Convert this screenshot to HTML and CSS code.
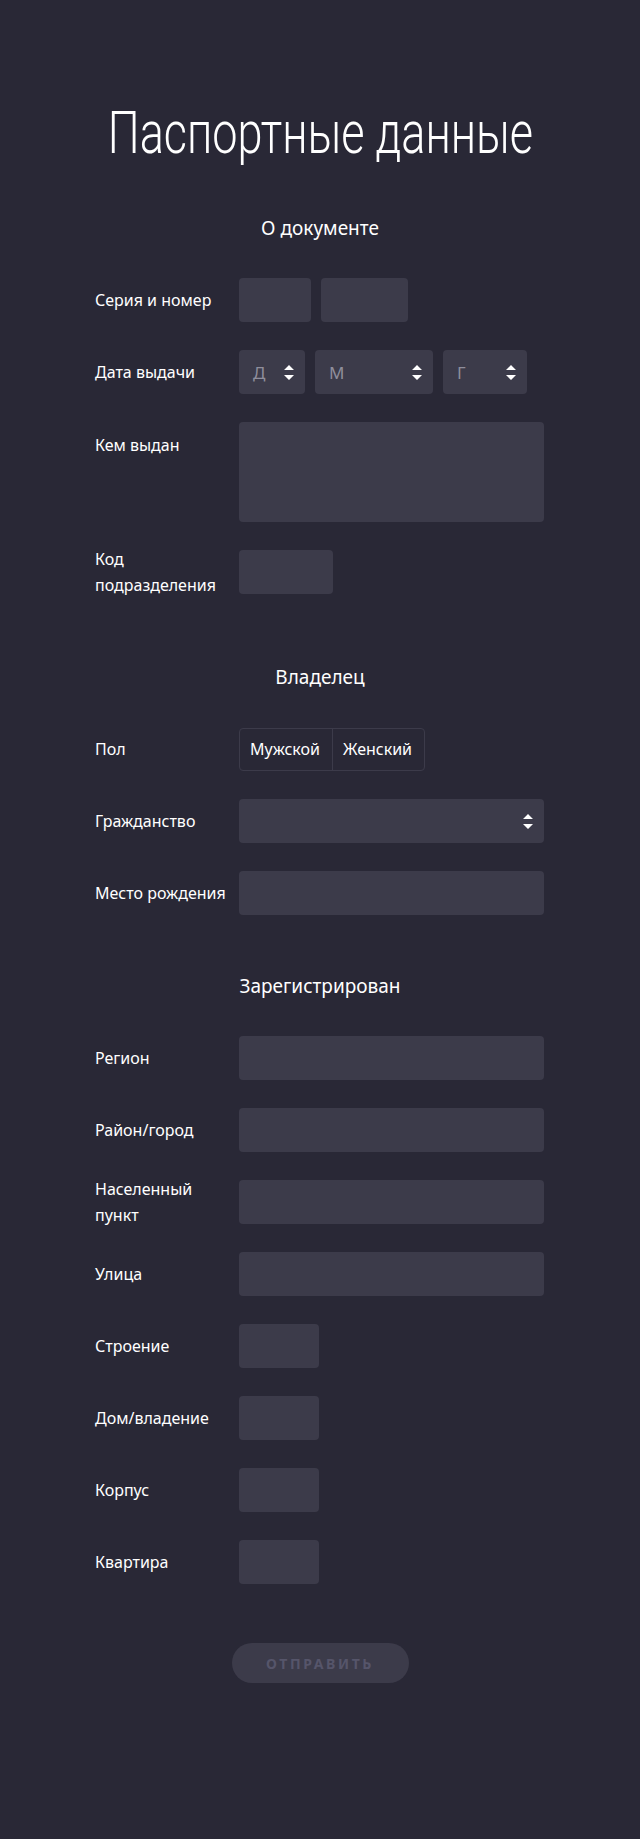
FILE: index.html
```html
<!DOCTYPE html>
<html lang="ru">
<head>
<meta charset="utf-8">
<title>Паспортные данные</title>
<link rel="stylesheet" href="styles.css">
</head>
<body>
<main class="page">
  <h1 class="title"><span class="title-text">Паспортные данные</span></h1>
  <form class="form">
    <section class="section section-first">
      <h2 class="section-title">О документе</h2>
      <div class="row">
        <div class="label">Серия и номер</div>
        <div class="fields">
          <div class="field w-series"></div>
          <div class="field w-number"></div>
        </div>
      </div>
      <div class="row">
        <div class="label">Дата выдачи</div>
        <div class="fields">
          <div class="field select w-day"><span class="placeholder">Д</span><svg class="arrows" width="10" height="15" viewBox="0 0 10 15"><path d="M5 0 L10 5 L0 5 Z M0 10 L10 10 L5 15 Z" fill="#fff"/></svg></div>
          <div class="field select w-month"><span class="placeholder">М</span><svg class="arrows" width="10" height="15" viewBox="0 0 10 15"><path d="M5 0 L10 5 L0 5 Z M0 10 L10 10 L5 15 Z" fill="#fff"/></svg></div>
          <div class="field select w-year"><span class="placeholder">Г</span><svg class="arrows" width="10" height="15" viewBox="0 0 10 15"><path d="M5 0 L10 5 L0 5 Z M0 10 L10 10 L5 15 Z" fill="#fff"/></svg></div>
        </div>
      </div>
      <div class="row row-top">
        <div class="label">Кем выдан</div>
        <div class="fields">
          <div class="field textarea"></div>
        </div>
      </div>
      <div class="row">
        <div class="label">Код подразделения</div>
        <div class="fields">
          <div class="field w-code"></div>
        </div>
      </div>
    </section>

    <section class="section">
      <h2 class="section-title">Владелец</h2>
      <div class="row">
        <div class="label">Пол</div>
        <div class="fields">
          <div class="segmented">
            <span class="segment">Мужской</span>
            <span class="segment">Женский</span>
          </div>
        </div>
      </div>
      <div class="row">
        <div class="label">Гражданство</div>
        <div class="fields">
          <div class="field select w-full"><span class="placeholder"></span><svg class="arrows" width="10" height="15" viewBox="0 0 10 15"><path d="M5 0 L10 5 L0 5 Z M0 10 L10 10 L5 15 Z" fill="#fff"/></svg></div>
        </div>
      </div>
      <div class="row">
        <div class="label">Место рождения</div>
        <div class="fields">
          <div class="field w-full"></div>
        </div>
      </div>
    </section>

    <section class="section">
      <h2 class="section-title">Зарегистрирован</h2>
      <div class="row">
        <div class="label">Регион</div>
        <div class="fields"><div class="field w-full"></div></div>
      </div>
      <div class="row">
        <div class="label">Район/город</div>
        <div class="fields"><div class="field w-full"></div></div>
      </div>
      <div class="row">
        <div class="label">Населенный пункт</div>
        <div class="fields"><div class="field w-full"></div></div>
      </div>
      <div class="row">
        <div class="label">Улица</div>
        <div class="fields"><div class="field w-full"></div></div>
      </div>
      <div class="row">
        <div class="label">Строение</div>
        <div class="fields"><div class="field w-small"></div></div>
      </div>
      <div class="row">
        <div class="label">Дом/владение</div>
        <div class="fields"><div class="field w-small"></div></div>
      </div>
      <div class="row">
        <div class="label">Корпус</div>
        <div class="fields"><div class="field w-small"></div></div>
      </div>
      <div class="row">
        <div class="label">Квартира</div>
        <div class="fields"><div class="field w-small"></div></div>
      </div>
    </section>

    <div class="actions">
      <button type="button" class="submit">Отправить</button>
    </div>
  </form>
</main>
</body>
</html>
```

FILE: styles.css
```css
html {
  background: #292836;
}
body {
  margin: 0;
  background: #292836;
  color: #ffffff;
  font-family: "Noto Sans", "Open Sans", sans-serif;
}
.page {
  width: 450px;
  margin: 0 auto;
  padding: 98px 0 156px;
  display: flex;
  flex-direction: column;
}
.title {
  margin: 0;
  display: flex;
  justify-content: center;
  font-family: "Roboto", "Noto Sans", sans-serif;
  font-weight: 300;
  font-size: 60px;
  line-height: 70px;
  white-space: nowrap;
}
.title-text {
  display: inline-block;
  transform: scaleX(0.75);
  transform-origin: center;
}
.form {
  display: flex;
  flex-direction: column;
  margin-top: 46px;
}
.section {
  display: flex;
  flex-direction: column;
  gap: 28px;
  margin-bottom: 57px;
}
.section-first {
  margin-bottom: 69px;
}
.section-title {
  margin: 0 0 8px;
  font-size: 19px;
  font-weight: 400;
  line-height: 28px;
  text-align: center;
}
.row {
  display: flex;
  align-items: center;
  min-height: 44px;
}
.row-top {
  align-items: flex-start;
}
.row-top .label {
  padding-top: 14px;
}
.label {
  width: 144px;
  flex: none;
  font-size: 16px;
  line-height: 26px;
  margin: -4px 0;
}
.fields {
  display: flex;
  gap: 10px;
  flex: 1;
}
.field {
  height: 44px;
  background: #3c3b4a;
  border-radius: 4px;
  box-sizing: border-box;
}
.w-series { width: 72px; }
.w-number { width: 87px; }
.w-day { width: 66px; }
.w-month { width: 118px; }
.w-year { width: 84px; }
.w-code { width: 94px; }
.w-small { width: 80px; }
.w-full { width: 305px; }
.textarea {
  width: 305px;
  height: 100px;
}
.select {
  display: flex;
  align-items: center;
  justify-content: space-between;
  padding: 0 11px 0 14px;
}
.placeholder {
  color: #8f8e9c;
  font-size: 17px;
}
.arrows {
  flex: none;
}
.segmented {
  display: flex;
  border: 1px solid #3c3b4a;
  border-radius: 4px;
  height: 43px;
  box-sizing: border-box;
}
.segment {
  display: flex;
  align-items: center;
  padding: 0 10px;
  font-size: 16px;
  width: 92px;
  box-sizing: border-box;
}
.segment + .segment {
  border-left: 1px solid #3c3b4a;
}
.actions {
  display: flex;
  justify-content: center;
  margin-top: 2px;
}
.submit {
  width: 177px;
  height: 40px;
  border: none;
  border-radius: 20px;
  background: #3c3b4a;
  color: #56556a;
  font-family: "Noto Sans", sans-serif;
  font-weight: 700;
  font-size: 14px;
  letter-spacing: 2.6px;
  text-transform: uppercase;
  padding: 0;
}
```
